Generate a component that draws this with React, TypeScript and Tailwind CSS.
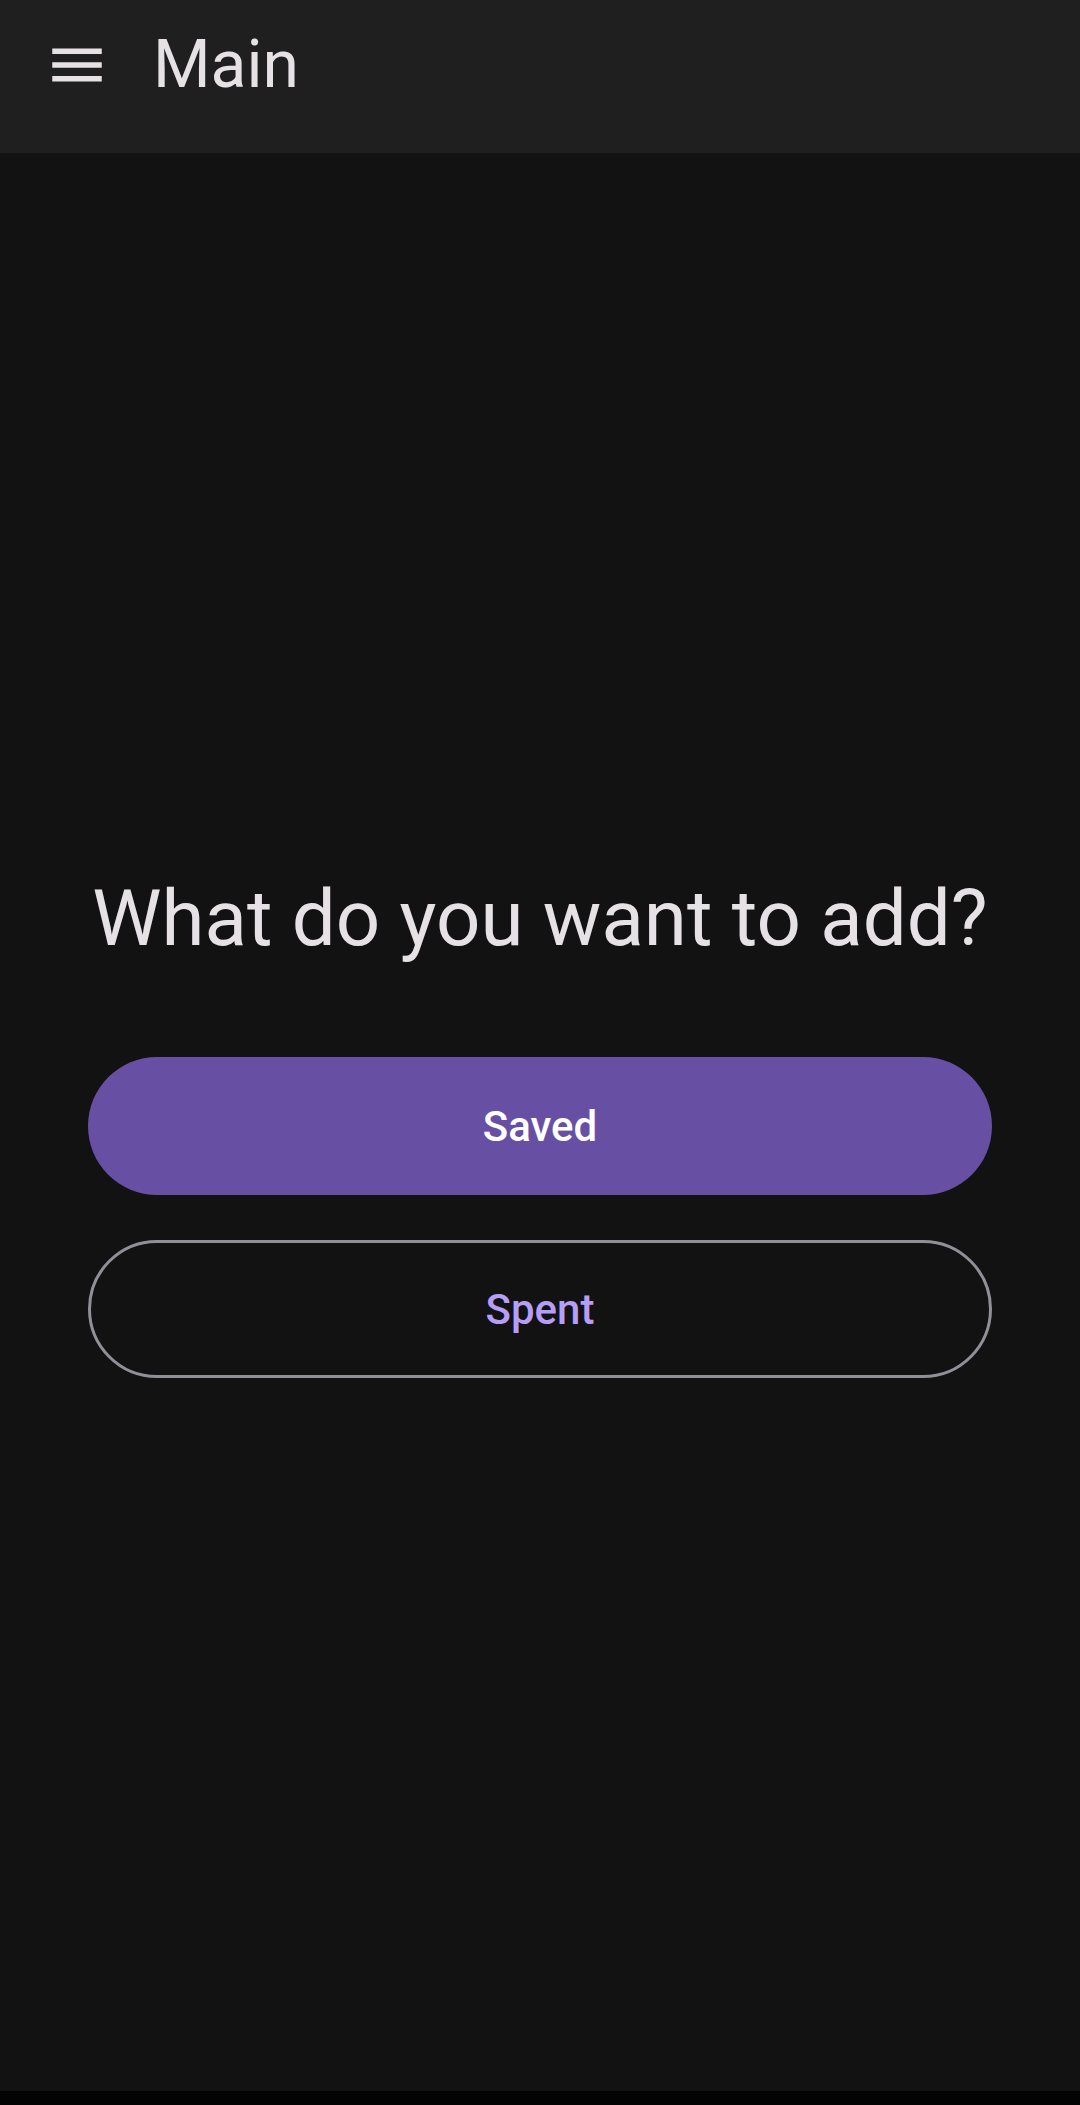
import { useState } from 'react';

const MenuIcon = () => (
  <svg width="66" height="66" viewBox="0 0 24 24" fill="#e6e1e5">
    <path d="M3 18h18v-2H3v2zm0-5h18v-2H3v2zm0-7v2h18V6H3z" />
  </svg>
);

const App = () => {
  const [choice, setChoice] = useState<'saved' | 'spent' | null>(null);

  return (
    <div className="flex h-[2105px] flex-col bg-[#121212] font-['Roboto',sans-serif] text-[#e6e1e5]">
      {/* top app bar */}
      <header className="flex h-[153px] shrink-0 items-start bg-[#1f1f1f] pl-[44px]">
        <button type="button" className="mt-[32px]" aria-label="Open menu">
          <MenuIcon />
        </button>
        <h1 className="ml-[43px] mt-[26px] text-[66px] leading-[77px] font-normal">Main</h1>
      </header>

      <main className="flex flex-1 flex-col justify-center px-[88px] pt-2">
        <h2 className="text-center text-[78px] leading-[90px] font-normal">What do you want to add?</h2>

        <div className="mt-[93px] flex flex-col gap-[45px]">
          <button
            type="button"
            onClick={() => setChoice('saved')}
            className="h-[138px] w-full rounded-full bg-[#6750a4] text-[42px] font-medium text-white"
          >
            Saved
          </button>
          <button
            type="button"
            onClick={() => setChoice('spent')}
            className="h-[138px] w-full rounded-full border-[3px] border-[#938f99] text-[42px] font-medium text-[#b69df8]"
          >
            Spent
          </button>
        </div>
        {choice && <span className="sr-only">{choice}</span>}
      </main>

      <div className="h-[14px] shrink-0 bg-[#030303]" />
    </div>
  );
};

export default App;
